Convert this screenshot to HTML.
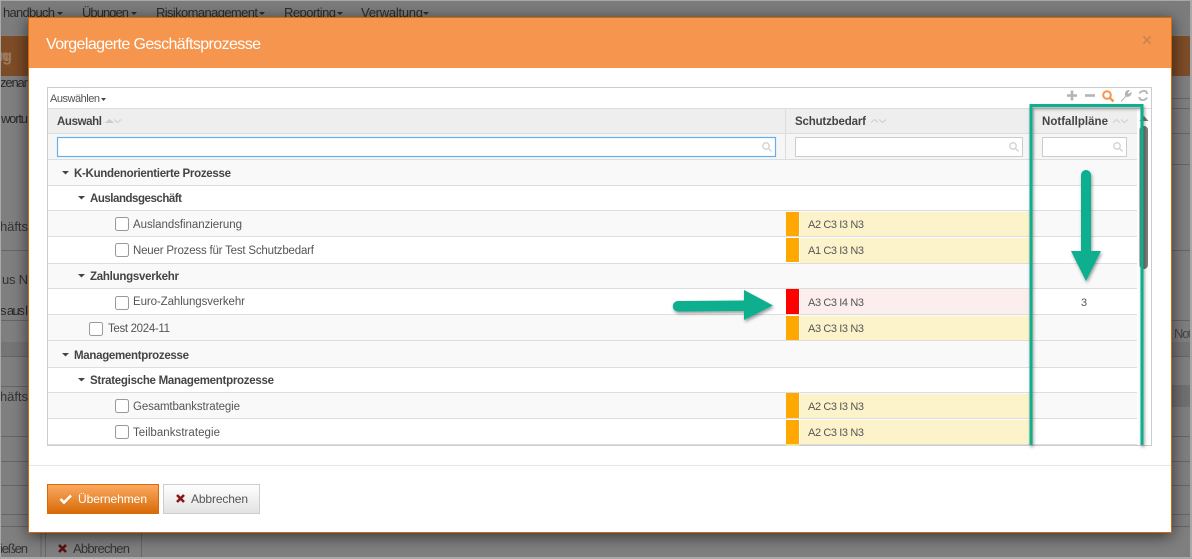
<!DOCTYPE html>
<html lang="de"><head><meta charset="utf-8"><title>Vorgelagerte Geschäftsprozesse</title>
<style>
html,body{margin:0;padding:0;width:1192px;height:559px;overflow:hidden;background:#7d7d7d}
svg{display:block;font-family:"Liberation Sans",sans-serif}
.t{font-size:11.5px;fill:#555}
.b{font-size:11.5px;font-weight:bold;fill:#444}
.s{font-size:11px;fill:#555}
.bg{font-size:13px;fill:#2a2a2a}
.l{stroke:#ddd;stroke-width:1}
.bl{stroke:#656565;stroke-width:1}
.cb{fill:#fff;stroke:#999;stroke-width:1}
</style></head><body>
<svg width="1192" height="559" viewBox="0 0 1192 559" xmlns="http://www.w3.org/2000/svg">
<defs>
<filter id="ms" x="-5%" y="-10%" width="110%" height="122%"><feDropShadow dx="0" dy="3" stdDeviation="8" flood-color="#000" flood-opacity=".6"/></filter>
<filter id="gs" x="-30%" y="-30%" width="160%" height="160%"><feDropShadow dx="1" dy="2" stdDeviation="1.6" flood-color="#000" flood-opacity=".4"/></filter>
<linearGradient id="ob" x1="0" y1="0" x2="0" y2="1"><stop offset="0" stop-color="#fbaa62"/><stop offset="1" stop-color="#d96a06"/></linearGradient>
<linearGradient id="gb" x1="0" y1="0" x2="0" y2="1"><stop offset="0" stop-color="#fff"/><stop offset="1" stop-color="#e2e2e2"/></linearGradient>
</defs>

<!-- background page -->
<rect width="1192" height="559" fill="#7f7f7f"/>
<rect width="1192" height="35" fill="#7c7c7c"/>
<rect x="0" y="36" width="1192" height="40" fill="#7d4c27"/>
<g class="bl">
<path d="M0 250.500H1192M0 320.500H1192M0 342.500H1192M0 356.500H1192M0 386.500H1192M0 436.500H1192M0 461.500H1192M0 485.500H1192M0 514.500H1192M0 526.500H1192M1150 98.500H1192M1150 108.500H1192M1150 133.500H1192M1150 164.500H1192" fill="none"/>
</g>
<rect x="0" y="342" width="1192" height="14" fill="#757575"/>
<rect x="1171" y="385" width="21" height="22" fill="#707070"/>
<g class="bg">
<text x="3" y="17" textLength="52">handbuch</text><path d="M57 12h6l-3 3z" fill="#2a2a2a"/>
<text x="82" y="17" textLength="47">Übungen</text><path d="M131 12h6l-3 3z" fill="#2a2a2a"/>
<text x="156" y="17" textLength="102">Risikomanagement</text><path d="M259 12h6l-3 3z" fill="#2a2a2a"/>
<text x="284" y="17" textLength="52">Reporting</text><path d="M337 12h6l-3 3z" fill="#2a2a2a"/>
<text x="361" y="17" textLength="62">Verwaltung</text><path d="M423 12h6l-3 3z" fill="#2a2a2a"/>
<text x="-1" y="61" textLength="13" style="font-size:16px;font-weight:bold;fill:#9b7b60">ng</text>
<text x="0" y="87" textLength="28">zenar</text>
<text x="1" y="123" textLength="27">wortu</text>
<text x="0" y="231" textLength="28" style="fill:#333">häfts</text>
<text x="2" y="284" textLength="26" style="fill:#333">us N</text>
<text x="0" y="315" textLength="28">s aus l</text>
<text x="0" y="401" textLength="28" style="fill:#333">häfts</text>
<text x="1174" y="338" textLength="18" style="fill:#444">Not</text>
<text x="0" y="553" textLength="28" style="fill:#333">ießen</text>
<text x="73" y="553" textLength="57" style="fill:#333">Abbrechen</text>
</g>
<path d="M41 532.500V559M45.500 532.500V559M141.500 532.500V559" stroke="#666" fill="none"/>
<path d="M59 545l7 7M66 545l-7 7" stroke="#5c0f0f" stroke-width="2.600"/>
<rect x="0" y="0" width="1192" height="1" fill="#a9a9a9"/>
<rect x="0" y="0" width="1" height="559" fill="#a9a9a9"/>
<rect x="1190" y="0" width="2" height="559" fill="#a9a9a9"/>
<rect x="0" y="557" width="1192" height="2" fill="#a9a9a9"/>

<!-- modal -->
<rect x="28.500" y="17.500" width="1143" height="515" fill="#fff" stroke="#d06a0c" filter="url(#ms)"/>
<rect x="29" y="18" width="1142" height="50" fill="#f6964e"/>
<text x="46" y="49" textLength="215" style="font-size:16px;fill:#fff">Vorgelagerte Geschäftsprozesse</text>
<path d="M1143.500 36.500l7 7M1150.500 36.500l-7 7" stroke="#c98454" stroke-width="1.800"/>

<!-- grid frame -->
<rect x="47.500" y="87.500" width="1104" height="358" fill="#fff" stroke="#ccc"/>
<text x="50" y="102" textLength="50" class="s">Auswählen</text><path d="M101 98h5l-2.500 3z" fill="#444"/>

<!-- toolbar icons -->
<path d="M1067 95.500h10M1072 90.500v10" stroke="#b4b4b4" stroke-width="2.600"/>
<path d="M1085 95.500h10" stroke="#b4b4b4" stroke-width="2.600"/>
<circle cx="1107" cy="95" r="3.800" fill="none" stroke="#f6964e" stroke-width="2"/><path d="M1110 98l3.500 3.500" stroke="#f6964e" stroke-width="2.400"/>
<path d="M1121 101.500l5-5.500a3.500 3.500 0 0 1 3-5.500l-1.800 2.400 1.600 1.600 2.300-1.800a3.500 3.500 0 0 1-5 3.300" fill="#b4b4b4" stroke="#b4b4b4"/>
<path d="M1147 92.500a4.500 4.500 0 0 0-7.500 1M1139.500 98.500a4.500 4.500 0 0 0 7.500-1" fill="none" stroke="#b4b4b4" stroke-width="1.800"/><path d="M1146 90v4h2.500zM1140.500 101v-4h-2.500z" fill="#b4b4b4"/>

<!-- header -->
<rect x="48" y="108" width="1089" height="25" fill="#eee"/>
<rect x="48" y="133" width="1089" height="26" fill="#f6f6f6"/>
<g class="l"><path d="M48 108.500H1151M48 133.500H1137M48 159.500H1137M785.500 108v51M1033.500 108v51" fill="none"/></g>
<text x="57" y="125" textLength="45" class="b">Auswahl</text>
<text x="795" y="125" textLength="71" class="b">Schutzbedarf</text>
<text x="1042" y="125" textLength="66" class="b">Notfallpläne</text>
<g fill="none" stroke="#ccc">
<path d="M106 122.500l3.500-3 3.500 3z" fill="#ccc"/><path d="M114 119.500l3.500 3 3.500-3"/>
<path d="M871 122.500l3.500-3 3.500 3M879 119.500l3.500 3 3.500-3"/>
<path d="M1113 122.500l3.500-3 3.500 3M1121 119.500l3.500 3 3.500-3"/>
</g>
<rect x="57.500" y="137.500" width="718" height="19" fill="#fff" stroke="#66afe9" stroke-width="1.200"/>
<rect x="795.500" y="137.500" width="227" height="19" fill="#fff" stroke="#ccc"/>
<rect x="1042.500" y="137.500" width="84" height="19" fill="#fff" stroke="#ccc"/>
<g fill="none" stroke="#d5d5d5" stroke-width="1.500">
<circle cx="766" cy="146" r="3.200"/><path d="M768.500 148.500l3 3"/>
<circle cx="1013" cy="146" r="3.200"/><path d="M1015.500 148.500l3 3"/>
<circle cx="1117" cy="146" r="3.200"/><path d="M1119.500 148.500l3 3"/>
</g>

<!-- rows -->
<g fill="#f9f9f9">
<rect x="48" y="160" width="1089" height="25"/>
<rect x="48" y="211" width="1089" height="25"/>
<rect x="48" y="264" width="1089" height="24"/>
<rect x="48" y="315" width="1089" height="25"/>
<rect x="48" y="341" width="1089" height="26"/>
<rect x="48" y="393" width="1089" height="25"/>
</g>
<!-- status cells -->
<g fill="#fdf3cb">
<rect x="800" y="212" width="233" height="24"/>
<rect x="800" y="238" width="233" height="25"/>
<rect x="800" y="316" width="233" height="24"/>
<rect x="800" y="394" width="233" height="24"/>
<rect x="800" y="420" width="233" height="24"/>
</g>
<rect x="800" y="289" width="233" height="25" fill="#fdeeee"/>
<g fill="#ffa800">
<rect x="786" y="212" width="13" height="24"/>
<rect x="786" y="238" width="13" height="24"/>
<rect x="786" y="316" width="13" height="24"/>
<rect x="786" y="393" width="13" height="25"/>
<rect x="786" y="420" width="13" height="24"/>
</g>
<rect x="786" y="289" width="13" height="25" fill="#f00"/>
<rect x="786" y="445" width="13" height="1" fill="#f5f060"/>
<g class="l"><path d="M48 185.500H1137M48 210.500H1137M48 236.500H1137M48 263.500H1137M48 288.500H1137M48 314.500H1137M48 340.500H1137M48 367.500H1137M48 392.500H1137M48 418.500H1137M48 444.500H1137" fill="none"/></g>

<!-- tree labels -->
<g fill="#444">
<path d="M62 171h7l-3.500 3.500z"/><path d="M78 196h7l-3.500 3.500z"/><path d="M78 274h7l-3.500 3.500z"/><path d="M62 353h7l-3.500 3.500z"/><path d="M78 378h7l-3.500 3.500z"/>
</g>
<text x="74" y="177" textLength="157" class="b">K-Kundenorientierte Prozesse</text>
<text x="90" y="202" textLength="92" class="b">Auslandsgeschäft</text>
<text x="90" y="280" textLength="89" class="b">Zahlungsverkehr</text>
<text x="74" y="359" textLength="115" class="b">Managementprozesse</text>
<text x="90" y="384" textLength="184" class="b">Strategische Managementprozesse</text>

<rect class="cb" x="115.500" y="217.500" width="13" height="13" rx="2"/>
<rect class="cb" x="115.500" y="243.500" width="13" height="13" rx="2"/>
<rect class="cb" x="115.500" y="296.500" width="13" height="13" rx="2"/>
<rect class="cb" x="89.500" y="322.500" width="13" height="13" rx="2"/>
<rect class="cb" x="115.500" y="399.500" width="13" height="13" rx="2"/>
<rect class="cb" x="115.500" y="425.500" width="13" height="13" rx="2"/>
<text x="133" y="228" textLength="109" class="t">Auslandsfinanzierung</text>
<text x="133" y="254" textLength="181" class="t">Neuer Prozess für Test Schutzbedarf</text>
<text x="133" y="305" textLength="112" class="t">Euro-Zahlungsverkehr</text>
<text x="108" y="332" textLength="62" class="t">Test 2024-11</text>
<text x="133" y="410" textLength="107" class="t">Gesamtbankstrategie</text>
<text x="133" y="436" textLength="87" class="t">Teilbankstrategie</text>

<text x="808" y="228" textLength="56" class="s">A2 C3 I3 N3</text>
<text x="808" y="254" textLength="56" class="s">A1 C3 I3 N3</text>
<text x="808" y="306" textLength="56" class="s">A3 C3 I4 N3</text>
<text x="808" y="332" textLength="56" class="s">A3 C3 I3 N3</text>
<text x="808" y="410" textLength="56" class="s">A2 C3 I3 N3</text>
<text x="808" y="436" textLength="56" class="s">A2 C3 I3 N3</text>
<text x="1081" y="306" textLength="6" class="s">3</text>

<!-- scrollbar -->
<path d="M1139.500 121l4.500-5 4.500 5z" fill="#777"/>
<rect x="1139.500" y="126" width="8.500" height="143" rx="4" fill="#7c7c7c"/>

<!-- footer -->
<path d="M29 465.500H1171" stroke="#e5e5e5"/>
<rect x="47.500" y="484.500" width="111" height="29" fill="url(#ob)" stroke="#d96a06"/>
<path d="M60.500 499l3.500 3.500 7-7" fill="none" stroke="#fff" stroke-width="2.600"/>
<text x="78" y="503" textLength="69" style="font-size:12px;fill:#fff">Übernehmen</text>
<rect x="163.500" y="484.500" width="96" height="29" fill="url(#gb)" stroke="#ccc"/>
<path d="M177 495l7 7M184 495l-7 7" stroke="#8b1414" stroke-width="2.600"/>
<text x="191" y="503" textLength="57" style="font-size:12px;fill:#555">Abbrechen</text>

<!-- annotations -->
<path d="M1033 445.500H1141" stroke="#aaa" stroke-width="1.500" filter="url(#gs)"/>
<path d="M1031 445V105.500H1142V445" fill="none" stroke="#07af8f" stroke-width="3" filter="url(#gs)"/>
<path d="M1081 175a5 5 0 0 1 10 0V251H1101L1086 281L1071 251H1081Z" fill="#07af8f" filter="url(#gs)"/>
<path d="M678 301L744 300.500V290L773 305.500L744 320V311L678 311.500a5 5 0 0 1 0-10.500Z" fill="#07af8f" filter="url(#gs)"/>
</svg>
</body></html>
